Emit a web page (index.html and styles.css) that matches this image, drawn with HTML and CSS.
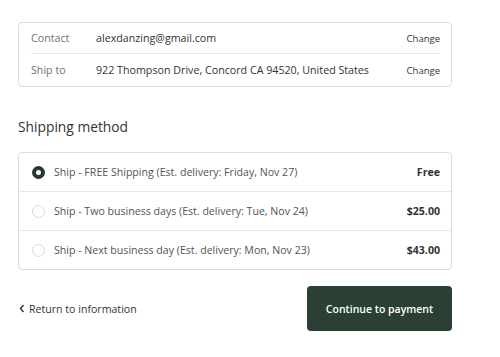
FILE: index.html
```html
<!DOCTYPE html>
<html lang="en">
<head>
  <meta charset="UTF-8">
  <meta name="viewport" content="width=device-width, initial-scale=1.0">
  <title>Shipping</title>
  <link rel="stylesheet" href="styles.css">
</head>
<body>
  <div class="container">
    <div class="review-box">
      <div class="review-row">
        <div class="review-label">Contact</div>
        <div class="review-value">alexdanzing@gmail.com</div>
        <a class="review-link" href="#">Change</a>
      </div>
      <div class="review-row">
        <div class="review-label">Ship to</div>
        <div class="review-value">922 Thompson Drive, Concord CA 94520, United States</div>
        <a class="review-link" href="#">Change</a>
      </div>
    </div>

    <h2 class="section-title">Shipping method</h2>

    <div class="method-box">
      <label class="method-row">
        <span class="radio checked"></span>
        <span class="method-name">Ship - FREE Shipping (Est. delivery: Friday, Nov 27)</span>
        <span class="method-price">Free</span>
      </label>
      <label class="method-row">
        <span class="radio"></span>
        <span class="method-name">Ship - Two business days (Est. delivery: Tue, Nov 24)</span>
        <span class="method-price">$25.00</span>
      </label>
      <label class="method-row">
        <span class="radio"></span>
        <span class="method-name">Ship - Next business day (Est. delivery: Mon, Nov 23)</span>
        <span class="method-price">$43.00</span>
      </label>
    </div>

    <div class="footer">
      <a class="back-link" href="#">
        <svg width="6" height="9" viewBox="0 0 6 9"><path d="M4.5 1 L1.5 4.5 L4.5 8" fill="none" stroke="#333" stroke-width="1.4"/></svg>
        Return to information
      </a>
      <button class="continue-btn">Continue to payment</button>
    </div>
  </div>
</body>
</html>
```

FILE: styles.css
```css
* {
  margin: 0;
  padding: 0;
  box-sizing: border-box;
}

body {
  font-family: 'Open Sans', 'Noto Sans', sans-serif;
  background: #fff;
  color: #333;
}

.container {
  width: 434px;
  margin-left: 18px;
  padding-top: 22px;
}

.review-box {
  border: 1px solid #dcdcdc;
  border-radius: 4px;
  padding: 0 11px 0 12px;
}

.review-row {
  display: flex;
  align-items: center;
  height: 30px;
  font-size: 10.7px;
}

.review-row + .review-row {
  height: 33px;
  border-top: 1px solid #e6e6e6;
}

.review-label {
  width: 65px;
  color: #737373;
}

.review-value {
  flex: 1;
  color: #333;
}

.review-link {
  font-size: 9.5px;
  color: #333;
  text-decoration: none;
}

.section-title {
  font-size: 13.8px;
  font-weight: 400;
  color: #333;
  margin-top: 30px;
  margin-bottom: 15px;
  line-height: 20px;
}

.method-box {
  border: 1px solid #dcdcdc;
  border-radius: 4px;
}

.method-row {
  display: flex;
  align-items: center;
  height: 38px;
  padding: 0 11px 0 13px;
  font-size: 10.6px;
}

.method-row + .method-row {
  height: 39px;
  border-top: 1px solid #e6e6e6;
}

.radio {
  width: 13px;
  height: 13px;
  border-radius: 50%;
  border: 1px solid #d9d9d9;
  margin-right: 9px;
  flex-shrink: 0;
}

.radio.checked {
  border: 4px solid #253a2e;
  background: #fff;
}

.method-name {
  flex: 1;
  color: #545454;
}

.method-price {
  font-weight: 700;
  color: #333;
}

.footer {
  display: flex;
  justify-content: space-between;
  align-items: center;
  margin-top: 16px;
}

.back-link {
  display: flex;
  align-items: center;
  gap: 4px;
  font-size: 10.6px;
  color: #333;
  text-decoration: none;
  padding-left: 1px;
}

.continue-btn {
  width: 145px;
  height: 45px;
  background: #2a4034;
  color: #fff;
  border: none;
  border-radius: 4px;
  font-family: 'Open Sans', 'Noto Sans', sans-serif;
  font-size: 10.5px;
  font-weight: 600;
}
```
